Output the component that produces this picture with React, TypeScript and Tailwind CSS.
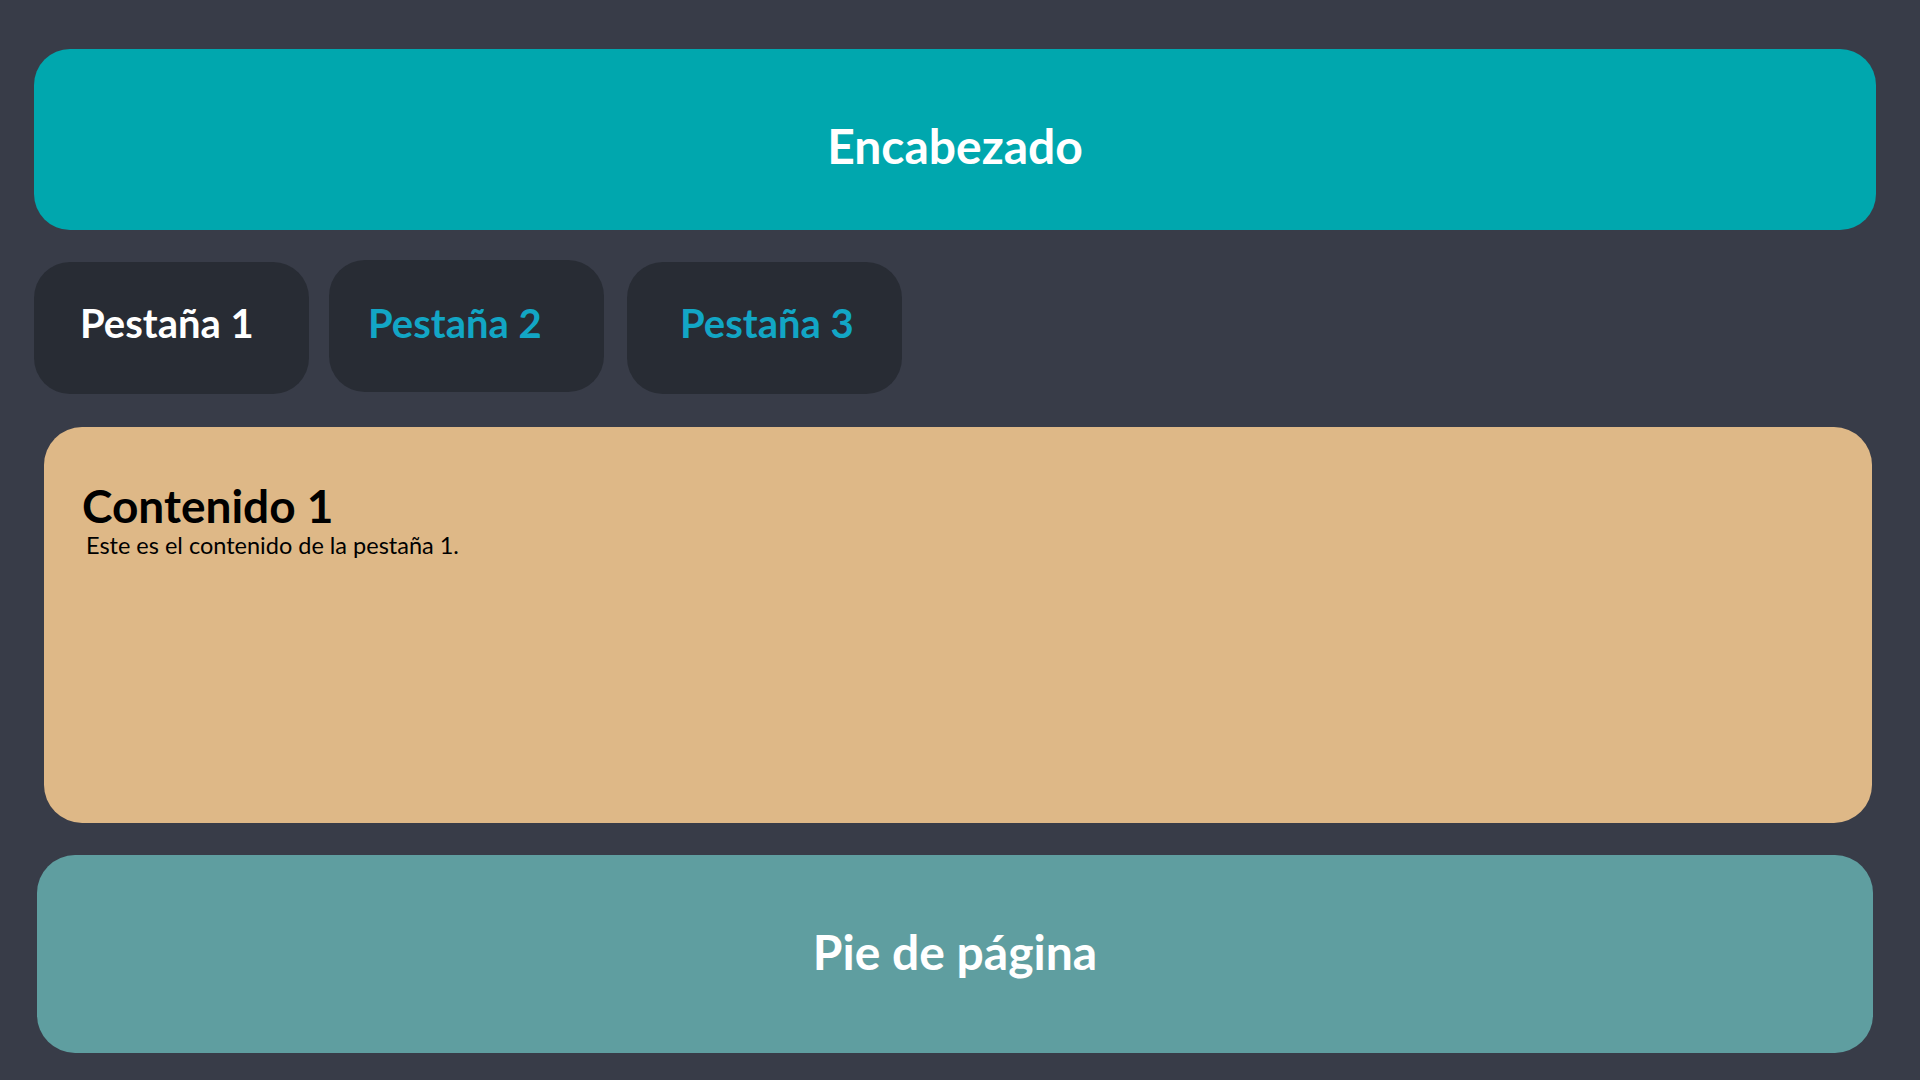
export default function App() {
  const tabs = ["Pestaña 1", "Pestaña 2", "Pestaña 3"]
  const active = 0
  // desplazamiento del texto dentro de cada pestaña
  const pads = ["pl-[46px] pb-[11px]", "pl-[39px] pb-[7px]", "pl-[53px] pb-[11px]"]

  return (
    <div className="min-h-screen bg-[#383c48] pt-[49px] pb-[27px] font-['Lato','Noto_Sans',sans-serif]">
      {/* Encabezado */}
      <header className="ml-[34px] mr-[44px] h-[181px] rounded-[36px] bg-[#00a7ae] flex items-center justify-center">
        <h1 className="text-[48px] font-bold text-white leading-none pt-[12px]">Encabezado</h1>
      </header>

      {/* Pestañas */}
      <nav className="ml-[34px] mt-[32px] flex items-start gap-[20px]">
        {tabs.map((t, i) => (
          <button
            key={t}
            className={
              "w-[275px] h-[132px] rounded-[36px] bg-[#282c34] text-[40px] font-bold leading-none flex items-center justify-start " +
              pads[i] +
              (i === active ? " text-white" : " text-[#12a6c5]") +
              (i === 1 ? " -mt-[2px]" : "") +
              (i === 2 ? " ml-[3px]" : "")
            }
          >
            {t}
          </button>
        ))}
      </nav>

      {/* Contenido */}
      <main className="ml-[44px] mr-[48px] mt-[33px] h-[396px] rounded-[38px] bg-[#deb887] px-[38px] pt-[54px] text-black">
        <h2 className="text-[46px] font-bold leading-[50px]">Contenido 1</h2>
        <p className="text-[23.5px] leading-[28px] ml-[4px]">Este es el contenido de la pestaña 1.</p>
      </main>

      {/* Pie de página */}
      <footer className="ml-[37px] mr-[47px] mt-[32px] h-[198px] rounded-[38px] bg-[#5f9ea0] flex items-center justify-center">
        <h3 className="text-[48px] font-bold text-white leading-none pb-[4px]">Pie de página</h3>
      </footer>
    </div>
  )
}
